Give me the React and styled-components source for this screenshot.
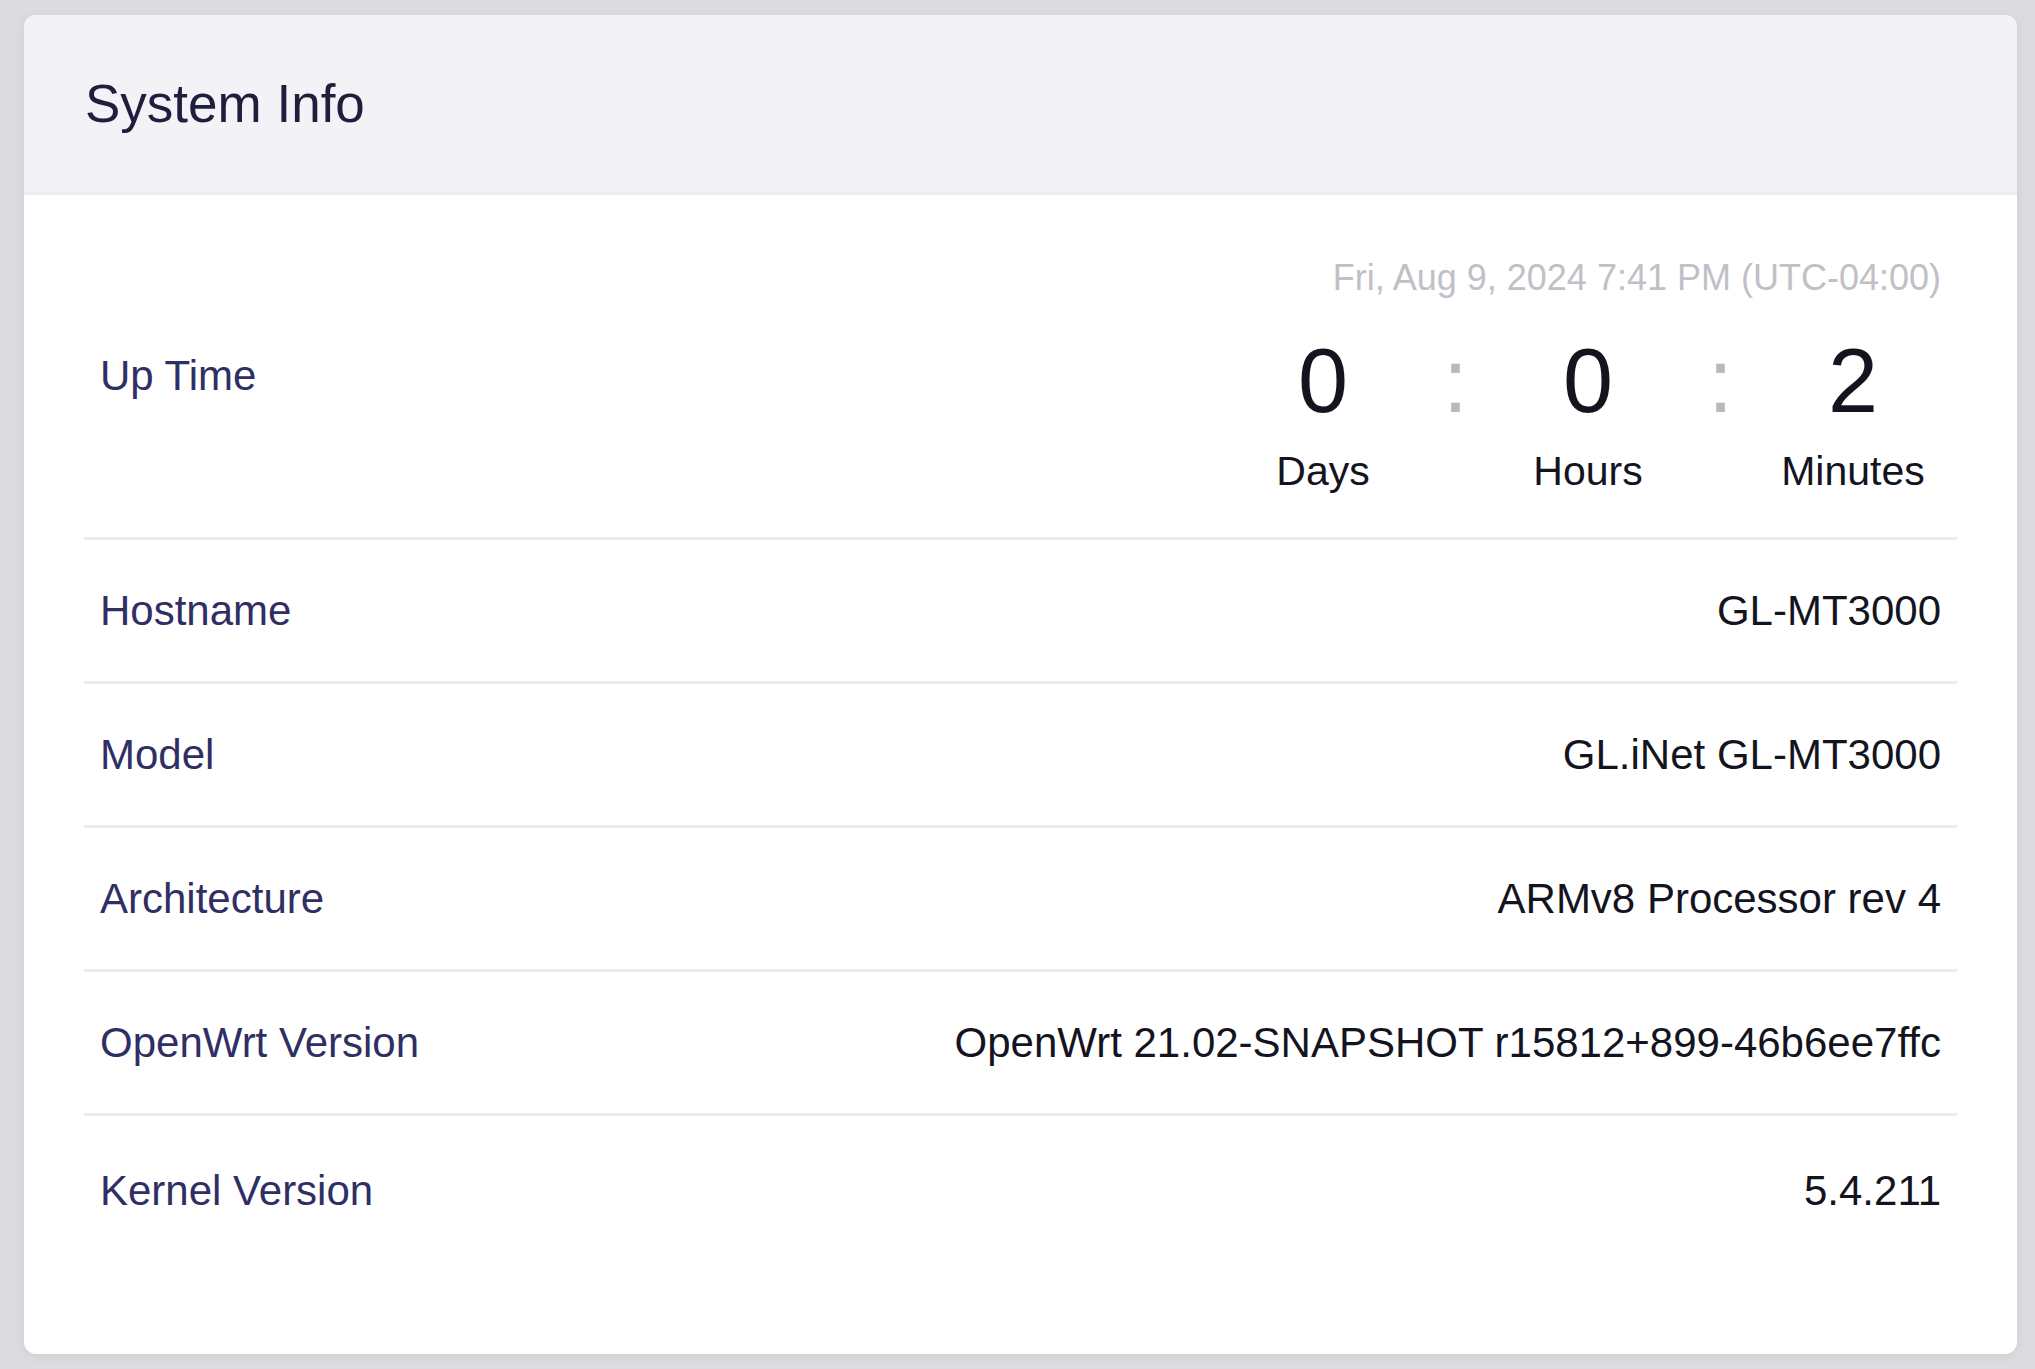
import React from 'react';
import styled, { createGlobalStyle } from 'styled-components';

const GlobalStyle = createGlobalStyle`
  html, body {
    margin: 0;
    padding: 0;
    background: #dcdce0;
    font-family: "Liberation Sans", Arial, sans-serif;
  }
`;

const Page = styled.div`
  box-sizing: border-box;
  min-height: 1369px;
  padding: 15px 18px 16px 24px;
`;

const Card = styled.section`
  background: #ffffff;
  border-radius: 12px;
  overflow: hidden;
  box-shadow: 0 2px 10px rgba(40, 40, 60, 0.08);
`;

const Header = styled.header`
  height: 177px;
  display: flex;
  align-items: center;
  padding-left: 61px;
  background: #f2f2f7;
  border-bottom: 3px solid #ebebf0;
`;

const Title = styled.h2`
  margin: 0;
  font-size: 53px;
  font-weight: 400;
  line-height: 1;
  color: #1f1f3d;
`;

const Body = styled.div`
  padding: 0 60px 93px;
`;

const Row = styled.div`
  display: flex;
  align-items: center;
  justify-content: space-between;
  box-sizing: border-box;
  height: ${(p) => (p.tall ? '345px' : '144px')};
  padding: ${(p) => (p.tall ? '64px 16px 45px' : '0 16px')};
  border-bottom: 3px solid #ebebf0;

  &:last-child {
    border-bottom: none;
    height: 145px;
    padding-top: 4px;
  }
`;

const Label = styled.div`
  font-size: 42px;
  line-height: 1;
  color: #2f2f63;
`;

const Value = styled.div`
  font-size: 42px;
  line-height: 1;
  color: #14141f;
  text-align: right;
`;

const Uptime = styled.div`
  display: flex;
  flex-direction: column;
  align-items: flex-end;
`;

const DateLine = styled.div`
  font-size: 36px;
  line-height: 1;
  color: #c0c0c6;
  margin-bottom: 40px;
`;

const Countdown = styled.div`
  display: flex;
  align-items: flex-start;
`;

const Unit = styled.div`
  width: 176px;
  display: flex;
  flex-direction: column;
  align-items: center;
`;

const Number = styled.div`
  font-size: 90px;
  line-height: 1;
  color: #14141f;
`;

const UnitName = styled.div`
  margin-top: 25px;
  font-size: 41px;
  line-height: 1;
  color: #14141f;
`;

const Sep = styled.div`
  width: 89px;
  text-align: center;
  font-size: 90px;
  line-height: 1;
  color: #b8b8bd;
`;

const info = [
  ['Hostname', 'GL-MT3000'],
  ['Model', 'GL.iNet GL-MT3000'],
  ['Architecture', 'ARMv8 Processor rev 4'],
  ['OpenWrt Version', 'OpenWrt 21.02-SNAPSHOT r15812+899-46b6ee7ffc'],
  ['Kernel Version', '5.4.211'],
];

const uptime = [
  ['0', 'Days'],
  ['0', 'Hours'],
  ['2', 'Minutes'],
];

export default function App() {
  return (
    <>
      <GlobalStyle />
      <Page>
        <Card>
          <Header>
            <Title>System Info</Title>
          </Header>
          <Body>
            <Row tall>
              <Label>Up Time</Label>
              <Uptime>
                <DateLine>Fri, Aug 9, 2024 7:41 PM (UTC-04:00)</DateLine>
                <Countdown>
                  {uptime.map(([num, name], i) => (
                    <React.Fragment key={name}>
                      {i > 0 && <Sep>:</Sep>}
                      <Unit>
                        <Number>{num}</Number>
                        <UnitName>{name}</UnitName>
                      </Unit>
                    </React.Fragment>
                  ))}
                </Countdown>
              </Uptime>
            </Row>
            {info.map(([label, value]) => (
              <Row key={label}>
                <Label>{label}</Label>
                <Value>{value}</Value>
              </Row>
            ))}
          </Body>
        </Card>
      </Page>
    </>
  );
}
